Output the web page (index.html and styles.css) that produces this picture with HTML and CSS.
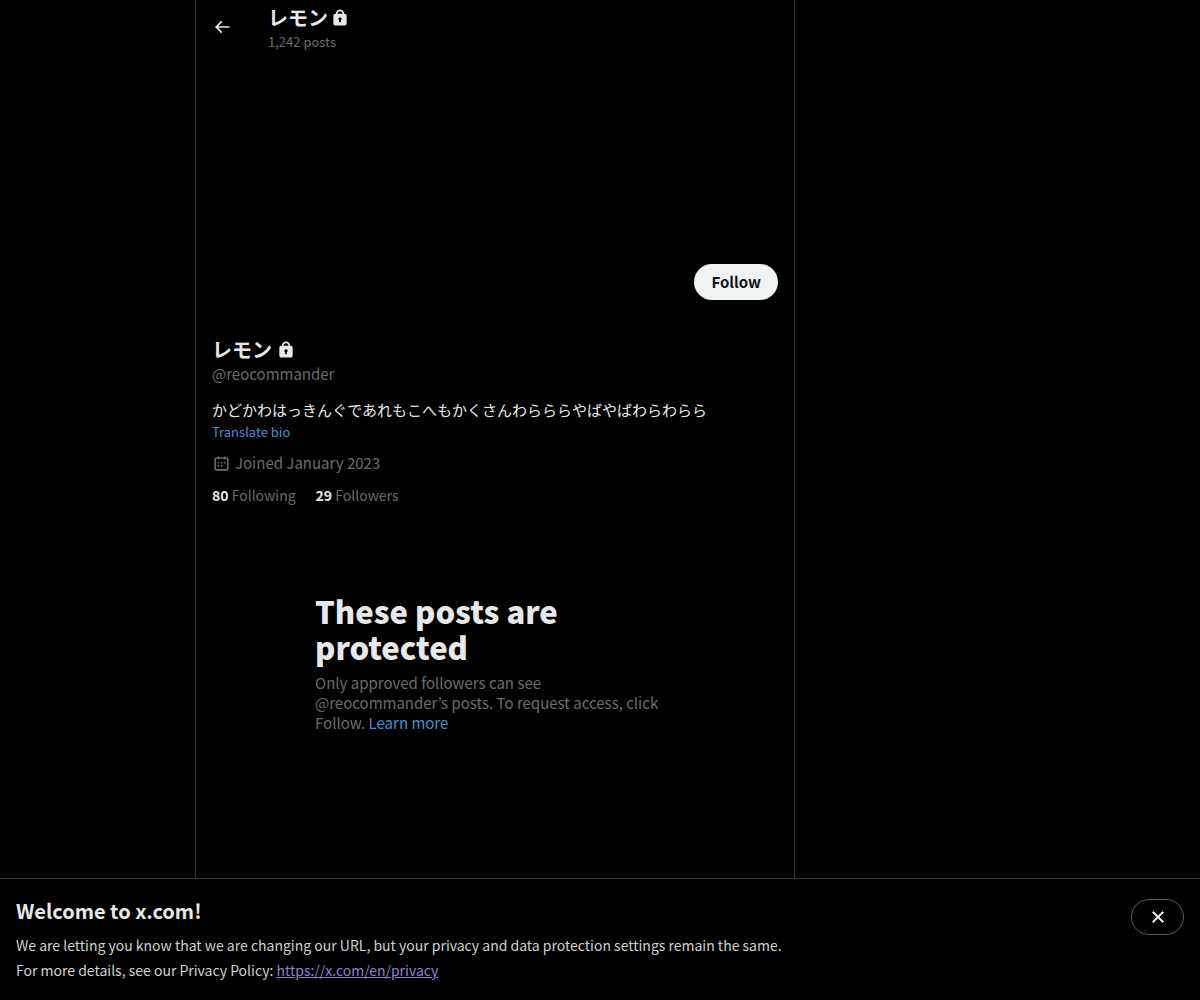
FILE: index.html
```html
<!DOCTYPE html>
<html lang="en">
<head>
    <meta charset="UTF-8">
    <meta name="viewport" content="width=device-width, initial-scale=1">
    <title>レモン (@reocommander) / X</title>
    <link rel="stylesheet" href="styles.css">
</head>
<body>
<svg class="defs" aria-hidden="true">
    <symbol id="lock" viewBox="0 0 24 24">
        <path d="M17.5 7H17v-.25c0-2.76-2.24-5-5-5s-5 2.24-5 5V7h-.5C5.12 7 4 8.12 4 9.5v9C4 19.88 5.12 21 6.5 21h11c1.39 0 2.5-1.12 2.5-2.5v-9C20 8.12 18.89 7 17.5 7zM13 14.73V17h-2v-2.27c-.59-.34-1-.99-1-1.73 0-1.1.9-2 2-2 1.11 0 2 .9 2 2 0 .74-.4 1.39-1 1.73zM15 7H9v-.25c0-1.66 1.35-3 3-3 1.66 0 3 1.34 3 3V7z"/>
    </symbol>
</svg>
<main class="column">
    <header class="top-bar">
        <a class="back" href="#" aria-label="Back">
            <svg viewBox="0 0 24 24"><path d="M7.414 13l5.043 5.04-1.414 1.42L3.586 12l7.457-7.46 1.414 1.42L7.414 11H21v2H7.414z"/></svg>
        </a>
        <div class="top-title">
            <h2 class="name">レモン <svg><use href="#lock"/></svg></h2>
            <p class="post-count">1,242 posts</p>
        </div>
    </header>
    <div class="banner"></div>
    <section class="profile">
        <div class="actions">
            <button class="follow" type="button">Follow</button>
        </div>
        <h1 class="name">レモン <svg><use href="#lock"/></svg></h1>
        <p class="handle">@reocommander</p>
        <p class="bio" lang="ja">かどかわはっきんぐであれもこへもかくさんわらららやばやばわらわらら</p>
        <a class="translate" href="#">Translate bio</a>
        <p class="joined">
            <svg viewBox="0 0 24 24"><path d="M7 4V3h2v1h6V3h2v1h1.5C19.89 4 21 5.12 21 6.5v12c0 1.38-1.11 2.5-2.5 2.5h-13C4.12 21 3 19.88 3 18.5v-12C3 5.12 4.12 4 5.5 4H7zm0 2H5.5c-.27 0-.5.22-.5.5v12c0 .28.23.5.5.5h13c.28 0 .5-.22.5-.5v-12c0-.28-.22-.5-.5-.5H17v1h-2V6H9v1H7V6zm0 6h2v-2H7v2zm0 4h2v-2H7v2zm4-4h2v-2h-2v2zm0 4h2v-2h-2v2zm4-4h2v-2h-2v2z"/></svg>
            Joined January 2023
        </p>
        <p class="counts">
            <span><b>80</b> Following</span>
            <span><b>29</b> Followers</span>
        </p>
    </section>
    <section class="protected">
        <h2>These posts are protected</h2>
        <p>Only approved followers can see @reocommander’s posts. To request access, click Follow. <a href="#">Learn more</a></p>
    </section>
</main>
<aside class="notice">
    <div>
        <h2>Welcome to x.com!</h2>
        <p>We are letting you know that we are changing our URL, but your privacy and data protection settings remain the same.</p>
        <p>For more details, see our Privacy Policy: <a href="https://x.com/en/privacy">https://x.com/en/privacy</a></p>
    </div>
    <button class="close" type="button" aria-label="Close">
        <svg viewBox="0 0 24 24"><path d="M10.59 12L4.54 5.96l1.42-1.42L12 10.59l6.04-6.05 1.42 1.42L13.41 12l6.05 6.04-1.42 1.42L12 13.41l-6.04 6.05-1.42-1.42L10.59 12z"/></svg>
    </button>
</aside>
</body>
</html>
```
FILE: styles.css
```css
* {
    box-sizing: border-box;
    margin: 0;
    padding: 0;
}
body {
    display: flex;
    flex-direction: column;
    min-height: 100vh;
    background: #000;
    color: #e8e8e8;
    font: 15px/20px "Noto Sans CJK JP", "Noto Sans", sans-serif;
}
a {
    color: #4490d0;
    text-decoration: none;
}
svg {
    width: 20px;
    height: 20px;
    fill: currentColor;
}
.defs {
    position: absolute;
    width: 0;
    height: 0;
}
.column {
    flex: 1;
    width: 100%;
    max-width: 600px;
    margin-left: 195px;
    border: solid #333;
    border-width: 0 1px;
}
.top-bar {
    display: flex;
    align-items: center;
    height: 53px;
    padding: 0 16px;
}
.back {
    display: flex;
    width: 56px;
    color: #e8e8e8;
}
.top-title {
    padding-top: 2px;
}
.name {
    display: flex;
    align-items: center;
    gap: 4px;
    font-size: 20px;
    line-height: 24px;
    font-weight: 700;
}
.top-title .name {
    gap: 2px;
}
.post-count {
    margin-top: 4px;
    color: #6c6c6c;
    font-size: 13px;
    line-height: 16px;
}
.banner {
    height: 199px;
}
.profile {
    padding: 12px 16px;
}
.actions {
    display: flex;
    justify-content: flex-end;
    height: 74px;
}
.follow {
    height: 36px;
    padding: 0 17px;
    border: 0;
    border-radius: 18px;
    background: #eff3f4;
    color: #0f1419;
    font: 700 15px/20px "Noto Sans CJK JP", "Noto Sans", sans-serif;
}
.handle,
.joined,
.counts {
    color: #6c6c6c;
}
.handle {
    margin-top: 2px;
}
.bio {
    margin-top: 16px;
}
.translate {
    display: block;
    margin-top: 4px;
    font-size: 13px;
    line-height: 16px;
}
.joined {
    display: flex;
    align-items: center;
    gap: 4px;
    margin: 13px 0 12px;
}
.joined svg {
    width: 19px;
    height: 19px;
}
.counts {
    display: flex;
    gap: 20px;
    font-size: 14px;
}
.counts b {
    color: #e8e8e8;
}
.protected {
    width: 360px;
    max-width: 100%;
    margin: 76px auto 32px;
}
.protected h2 {
    margin-bottom: 8px;
    font-size: 31px;
    line-height: 36px;
    font-weight: 900;
}
.protected p {
    color: #6c6c6c;
}
.notice {
    display: flex;
    justify-content: space-between;
    align-items: flex-start;
    padding: 20px 16px 17px;
    border-top: 1px solid #383838;
}
.notice h2 {
    margin-bottom: 10px;
    font-size: 20px;
    line-height: 24px;
}
.notice p {
    color: #d0d0d0;
    font-size: 14px;
    line-height: 25px;
}
.notice p a {
    color: #8f80cc;
    text-decoration: underline;
}
.close {
    display: flex;
    align-items: center;
    justify-content: center;
    width: 53px;
    height: 36px;
    border: 1px solid #5a5f62;
    border-radius: 18px;
    background: #000;
    color: #eff3f4;
}
.close svg {
    width: 18px;
    height: 18px;
    stroke: currentColor;
}
```
